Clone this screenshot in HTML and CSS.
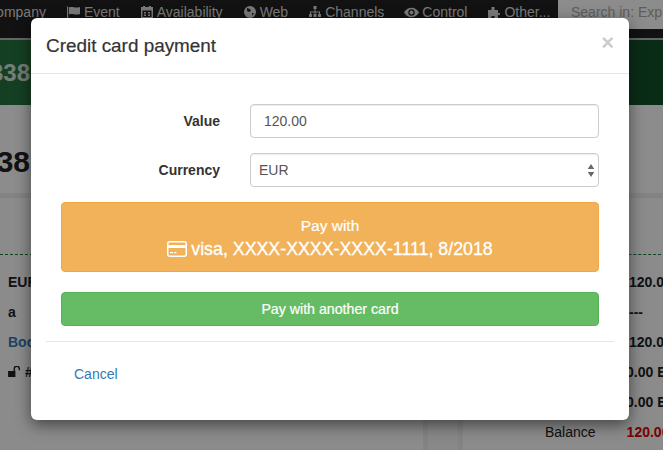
FILE: index.html
```html
<!DOCTYPE html>
<html lang="en">
<head>
<meta charset="utf-8">
<title>Credit card payment</title>
<link rel="stylesheet" href="styles.css">
</head>
<body>
<div class="page">
  <nav class="nav">
    <div class="nav-items">
      <span class="nav-first">Company</span>
      <span class="nav-item"><svg class="nav-icon nav-icon-flag" viewBox="0 0 15 14"><path d="M1 1.500h1.200V13H1zM3 2.500c3-1.500 6 1 11-.5v7c-5 1.500-8-1-11 .5z" fill="currentColor"/></svg>Event</span>
      <span class="nav-item"><svg class="nav-icon" viewBox="0 0 14 14"><path fill-rule="evenodd" d="M1 2h2V1h2v1h4V1h2v1h2v11H1zM2.500 5.500V12h9V5.500zM4 7h2v1.500H4zM8 7h2v1.500H8zM4 9.500h2V11H4zM8 9.500h2V11H8z" fill="currentColor"/></svg>Availability</span>
      <span class="nav-item"><svg class="nav-icon" viewBox="0 0 14 14"><circle cx="7" cy="7" r="6" fill="currentColor"/><path d="M4 3l3 1 1 2-2 1-2-1zM9 8l2 0-2 3z" fill="#222"/></svg>Web</span>
      <span class="nav-item"><svg class="nav-icon" viewBox="0 0 14 14"><path d="M5.500 1h3v3h-3zM6.500 4h1v2.500H12V9h-1V7.500H7.500V9h-1V7.500H3V9H2V6.500h4.500zM1 9h3v3H1zM5.500 9h3v3h-3zM10 9h3v3h-3z" fill="currentColor"/></svg>Channels</span>
      <span class="nav-item"><svg class="nav-icon nav-icon-wide" viewBox="0 0 14 10"><path fill-rule="evenodd" d="M0 5c3-6 11-6 14 0-3 6-11 6-14 0zM7 2a3 3 0 1 0 0 6 3 3 0 0 0 0-6z" fill="currentColor"/><circle cx="7" cy="5" r="1.800" fill="currentColor"/></svg>Control</span>
      <span class="nav-item"><svg class="nav-icon" viewBox="0 0 14 14"><path d="M1 5h3.500V2h3v3H11v3h2v2h-2v3H7.500v-2h-3v2H1z" fill="currentColor"/></svg>Other...</span>
    </div>
    <div class="search">Search in: Exp</div>
  </nav>
  <div class="banner"><span class="banner-num">338</span></div>
  <div class="title-row"><span class="title-num">338</span></div>
  <div class="columns">
    <section class="panel panel-left">
      <div class="dash"></div>
      <div class="row strong">EUR</div>
      <div class="row strong">a</div>
      <div class="row strong link">Booking</div>
      <div class="row strong"><svg class="lock" viewBox="0 0 14 12"><path d="M0 5.500h8V12H0zM6 5.500V3a3.500 3.500 0 0 1 7 0v1.500h-1.500V3a2 2 0 0 0-4 0v2.500z" fill="currentColor"/></svg>#</div>
    </section>
    <section class="panel panel-right">
      <div class="dash"></div>
      <div class="row strong amount">120.00</div>
      <div class="row strong amount">---</div>
      <div class="row strong amount">120.00</div>
      <div class="row strong amount-eur">0.00 EUR</div>
      <div class="row strong amount-eur">0.00 EUR</div>
      <div class="row balance"><span>Balance</span><span class="red">120.00</span></div>
    </section>
  </div>
</div>
<div class="backdrop"></div>
<div class="modal">
  <header class="modal-header">
    <h4 class="modal-title">Credit card payment</h4>
    <span class="close">×</span>
  </header>
  <div class="modal-body">
    <div class="field">
      <label class="field-label">Value</label>
      <div class="control">120.00</div>
    </div>
    <div class="field">
      <label class="field-label">Currency</label>
      <div class="control control-select">EUR
        <svg class="carets" viewBox="0 0 8 14"><path d="M4 0l3.500 5.500h-7zM4 14L.5 8.500h7z" fill="#666"/></svg>
      </div>
    </div>
    <button class="btn btn-orange">
      <span class="btn-small">Pay with</span>
      <span class="btn-big"><svg class="card" viewBox="0 0 20 16"><rect x=".75" y=".75" width="18.500" height="14.500" rx="2" fill="none" stroke="#fff" stroke-width="1.500"/><path d="M1 4h18v3H1zM3 11h3v1.200H3zM7 11h2.500v1.200H7z" fill="#fff"/></svg>visa, XXXX-XXXX-XXXX-1111, 8/2018</span>
    </button>
    <button class="btn btn-green">Pay with another card</button>
  </div>
  <footer class="modal-footer"><a class="cancel">Cancel</a></footer>
</div>
</body>
</html>
```
FILE: styles.css
```css
* { box-sizing: border-box; }
html, body { margin: 0; height: 450px; overflow: hidden; }
body { font-family: "Liberation Sans", Arial, sans-serif; font-size: 14px; color: #333; background: #fff; position: relative; }
.page { height: 450px; overflow: hidden; }
.nav { height: 38px; background: #222; color: #ddd; display: flex; justify-content: space-between; align-items: flex-start; }
.nav-items { display: flex; margin-left: -14px; font-size: 14px; line-height: 24px; gap: 20px; white-space: nowrap; }
.nav-item { display: flex; align-items: center; gap: 3px; }
.nav-icon { width: 14px; height: 14px; }
.nav-icon-flag { width: 15px; }
.nav-icon-wide { width: 15px; height: 11px; }
.search { width: 105px; height: 29px; background: #fff; color: #aaa; line-height: 24px; padding-left: 13px; white-space: nowrap; overflow: hidden; }
.banner { height: 67px; background: linear-gradient(90deg, #27743f, #12502a 100%); border-top: 2px solid #bbb; display: flex; align-items: center; }
.banner-num { font-size: 24px; font-weight: bold; color: #fff; opacity: .8; margin-left: -10px; }
.title-row { height: 88px; padding-top: 40px; }
.title-num { font-size: 30px; font-weight: bold; color: #222; margin-left: -20px; }
.columns { display: flex; gap: 30px; background: #f7f7f7; height: 257px; }
.panel { background: #fdfdfd; border-top: 5px solid #eee; }
.panel-left { width: 428px; padding: 0 8px; border-right: 5px solid #eee; }
.panel-right { flex: 1; border-left: 5px solid #eee; overflow: hidden; }
.dash { margin: 56px -8px 12px; border-top: 1px dashed #1e7a3a; height: 0; }
.row { height: 30px; line-height: 30px; white-space: nowrap; }
.strong { font-weight: bold; color: #222; }
.link { color: #337ab7; }
.amount { margin-left: 166px; }
.amount-eur { margin-left: 163px; }
.lock { width: 13px; height: 11px; margin-right: 4px; }
.balance { display: flex; gap: 31px; margin-left: 82px; color: #222; }
.red { color: #d00; font-weight: bold; }
.backdrop { position: absolute; inset: 0; background: rgba(0, 0, 0, .45); }
.modal { position: absolute; left: 31px; top: 18px; width: 598px; height: 402px; background: #fff; border-radius: 6px; box-shadow: 0 5px 15px rgba(0, 0, 0, .5); }
.modal-header { height: 56px; padding: 15px; border-bottom: 1px solid #e5e5e5; display: flex; justify-content: space-between; }
.modal-title { margin: 0; font-size: 18.9px; font-weight: 400; line-height: 26px; color: #333; -webkit-text-stroke: .2px #333; }
.close { font-size: 22px; font-weight: bold; color: #000; opacity: .2; line-height: 20px; }
.modal-body { padding: 30px 30px 0; }
.field { display: flex; align-items: center; margin-bottom: 15px; }
.field-label { width: 159px; text-align: right; font-weight: bold; color: #333; }
.control { margin-left: 30px; width: 349px; height: 34px; border: 1px solid #ccc; border-radius: 4px; padding: 0 13px; line-height: 32px; box-shadow: inset 0 1px 1px rgba(0, 0, 0, .075); color: #555; position: relative; }
.control-select { padding-left: 8px; }
.carets { position: absolute; right: 3px; top: 10px; width: 8px; height: 13px; }
.btn { display: block; width: 538px; font-family: inherit; color: #fff; border-radius: 4px; text-align: center; cursor: pointer; }
.btn-orange { height: 70px; background: #f0ad4e; border: 1px solid #eea236; opacity: .93; padding: 2px 0 0; }
.btn-small { display: block; font-size: 15.5px; line-height: 22px; -webkit-text-stroke: .2px #fff; }
.btn-big { display: flex; justify-content: center; align-items: center; gap: 4px; font-size: 17.8px; line-height: 24px; -webkit-text-stroke: .3px #fff; }
.card { width: 20px; height: 16px; }
.btn-green { height: 34px; margin-top: 20px; background: #5cb85c; border: 1px solid #4cae4c; opacity: .94; font-size: 14.2px; padding: 0; -webkit-text-stroke: .2px #fff; }
.modal-footer { margin: 15px 15px 0; border-top: 1px solid #e5e5e5; padding: 24px 28px; }
.cancel { color: #337ab7; }
```
